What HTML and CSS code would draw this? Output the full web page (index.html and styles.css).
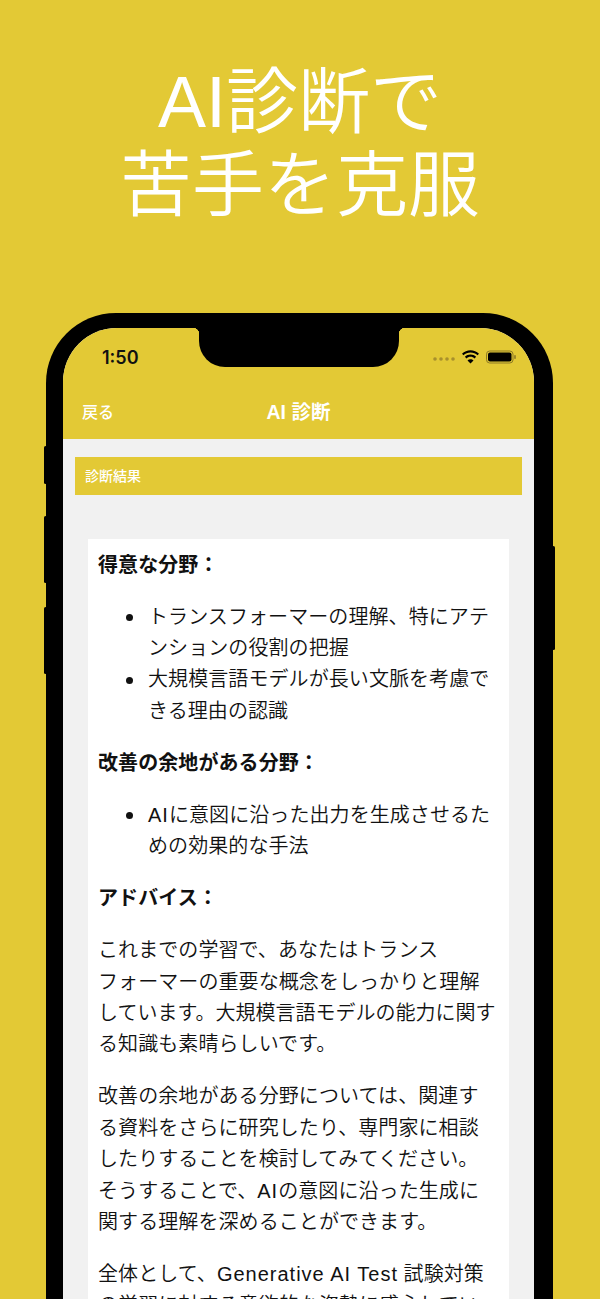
FILE: index.html
```html
<!DOCTYPE html>
<html lang="ja">
<head>
<meta charset="utf-8">
<title>AI診断</title>
<link rel="stylesheet" href="styles.css">
</head>
<body>
<main class="stage">
  <h1 class="headline">AI診断で<br>苦手を克服</h1>
  <div class="phone">
    <span class="side-btn side-mute"></span>
    <span class="side-btn side-up"></span>
    <span class="side-btn side-down"></span>
    <span class="side-btn side-power"></span>
    <div class="screen">
      <div class="notch"></div>
      <div class="appbar">
        <div class="status">
          <span class="time">1:50</span>
          <div class="status-icons">
            <svg class="dots" width="22" height="4" viewBox="0 0 22 4"><g fill="#a8902c"><circle cx="2" cy="2" r="1.8"/><circle cx="8" cy="2" r="1.8"/><circle cx="14" cy="2" r="1.8"/><circle cx="20" cy="2" r="1.8"/></g></svg>
            <svg class="wifi" width="19" height="14" viewBox="0 0 19 14"><path d="M9.5 2.6c2.7 0 5.100 1 7 2.700l1.500-1.600C15.700 1.500 12.700.2 9.500.2S3.300 1.500 1 3.700l1.500 1.600c1.900-1.700 4.300-2.700 7-2.700z"/><path d="M9.500 6.800c1.600 0 3 .6 4.100 1.600l1.500-1.600C13.600 5.400 11.700 4.500 9.500 4.500s-4.100.9-5.600 2.300l1.500 1.600c1.100-1 2.500-1.600 4.100-1.600z"/><path d="M9.500 13.600l3-3.200c-.8-.7-1.800-1.200-3-1.200s-2.200.5-3 1.200z"/></svg>
            <svg class="battery" width="31" height="14" viewBox="0 0 31 14"><rect x=".5" y="1" width="26.500" height="12" rx="3.200" fill="none" stroke="#8d7a26"/><rect x="2" y="2.500" width="23.500" height="9" rx="2"/><rect x="28.200" y="5" width="1.600" height="4" rx=".8" fill="#8d7a26"/></svg>
          </div>
        </div>
        <nav class="nav">
          <span class="nav-back">戻る</span>
          <span class="nav-title">AI 診断</span>
        </nav>
      </div>
      <div class="content">
        <div class="section-bar">診断結果</div>
        <article class="card">
          <p class="lead"><strong>得意な分野：</strong></p>
          <ul>
            <li>トランスフォーマーの理解、特にアテンションの役割の把握</li>
            <li>大規模言語モデルが長い文脈を考慮できる理由の認識</li>
          </ul>
          <p class="lead"><strong>改善の余地がある分野：</strong></p>
          <ul>
            <li><span class="latin">AI</span>に意図に沿った出力を生成させるための効果的な手法</li>
          </ul>
          <p class="lead"><strong>アドバイス：</strong></p>
          <p>これまでの学習で、あなたはトランス<br>フォーマーの重要な概念をしっかりと理解<br><span class="line">しています。大規模言語モデルの能力に関す</span>る知識も素晴らしいです。</p>
          <p>改善の余地がある分野については、関連する資料をさらに研究したり、専門家に相談したりすることを検討してみてください。そうすることで、<span class="latin">AI</span>の意図に沿った生成に関する理解を深めることができます。</p>
          <p>全体として、<span class="latin">Generative AI Test</span> 試験対策の学習に対する意欲的な姿勢に感心しています。</p>
        </article>
      </div>
    </div>
  </div>
</main>
</body>
</html>
```
FILE: styles.css
```css
* { box-sizing: border-box; }
html, body { margin: 0; padding: 0; height: 1299px; overflow: hidden; }
body { font-family: "Liberation Sans", "Noto Sans CJK JP", sans-serif; background: #e3c935; }
.stage { height: 1299px; overflow: hidden; background: #e3c935; padding-top: 61px; }
.headline {
  margin: 0; text-align: center; color: #fff; font-weight: 350;
  font-size: 72px; line-height: 83px;
}
.phone {
  position: relative; margin: 86px 0 0 46px; width: 507px; height: 1100px;
  background: #000; padding: 15px 19px 0 17px; border-radius: 70px 70px 0 0;
}
.side-btn { position: absolute; background: #000; width: 3px; border-radius: 2px; }
.side-mute { left: -2px; top: 133px; height: 38px; }
.side-up { left: -2px; top: 203px; height: 67px; }
.side-down { left: -2px; top: 294px; height: 67px; }
.side-power { right: -2px; top: 233px; height: 104px; }
.screen {
  position: relative; height: 100%; background: #f1f1f1;
  border-radius: 54px 54px 0 0; overflow: hidden;
}
.notch {
  position: absolute; top: 0; left: 136px; width: 200px; height: 39px;
  background: #000; border-radius: 0 0 26px 26px;
}
.notch::before, .notch::after {
  content: ""; position: absolute; top: 0; width: 6px; height: 6px;
  background: radial-gradient(circle at 0 100%, transparent 6px, #000 6.500px);
}
.notch::before { left: -6px; }
.notch::after { right: -6px; transform: scaleX(-1); }
.appbar { background: #e3c935; height: 111px; }
.status {
  display: flex; justify-content: space-between; align-items: center;
  padding: 17px 17px 0 39px; height: 41px;
}
.time {
  font-family: Inter, "Noto Sans", sans-serif; font-weight: 600; font-size: 18px;
  line-height: 20px; color: #111; margin-top: 2px;
}
.status-icons { display: flex; align-items: center; gap: 6px; }
.dots { margin-top: 4px; }
.nav { position: relative; display: flex; justify-content: center; align-items: center; height: 40px; margin-top: 22px; }
.nav-back { position: absolute; left: 19px; color: #fff; font-size: 16px; font-weight: 500; }
.nav-title { color: #fff; font-size: 19.5px; font-weight: 700; margin-top: -2px; }
.content { padding: 18px 12px 0; }
.section-bar {
  background: #e3c935; color: #fff; height: 38px; padding: 0 0 2px 10px;
  display: flex; align-items: center; font-size: 14px; font-weight: 500;
}
.card { background: #fff; margin: 44px 13px 0; padding: 10.500px 13px 0 10px; color: #111; font-size: 20px; font-weight: 350; line-height: 31.400px; letter-spacing: .08px; }
.card p { margin: 0 0 20.600px; }
.card ul { margin: 0 0 20.600px; padding-left: 50px; list-style: none; }
.card li { position: relative; }
.card li::before {
  content: ""; position: absolute; left: -22.500px; top: 12.500px; width: 7px; height: 7px;
  border-radius: 50%; background: #111;
}
.card strong { font-weight: 700; }
.line { white-space: nowrap; letter-spacing: 0; }
.latin { letter-spacing: 1px; }
```
